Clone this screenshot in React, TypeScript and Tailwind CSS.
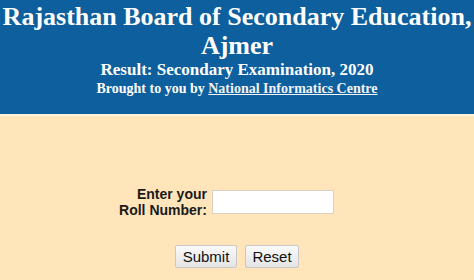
export default function App() {
  return (
    <div className="w-[474px] h-[280px] overflow-hidden bg-[#ffe5b9]">
      <div className="h-[116px] bg-[#0d5f9d] text-white text-center font-['Liberation_Serif',serif] font-bold pt-[2px] border-b-2 border-[#fff3d9]">
        <h1 className="text-[26px] leading-[29px]">Rajasthan Board of Secondary Education, Ajmer</h1>
        <div className="text-[17px] leading-[20px]">Result: Secondary Examination, 2020</div>
        <div className="text-[14px] leading-[17px]">
          Brought to you by <a href="#" className="underline text-[#f3f3f3]">National Informatics Centre</a>
        </div>
      </div>
      <form className="font-['Liberation_Sans',sans-serif] pt-[70px]">
        <div className="flex justify-center items-center gap-[5px] pr-[21px]">
          <label className="text-right font-bold text-[14px] leading-[16px] text-[#1a1a1a]">
            Enter your<br />Roll Number:
          </label>
          <input type="text" className="w-[122px] h-[24px] bg-white border border-[#d8d0c0]" />
        </div>
        <div className="flex justify-center gap-[8px] mt-[27px]">
          <button type="submit" className="w-[62px] h-[23px] text-[15px] border border-[#c8c8c8] rounded-[2px] bg-gradient-to-b from-[#fafafa] to-[#e4e4e4] text-[#111]">Submit</button>
          <button type="reset" className="w-[54px] h-[23px] text-[15px] border border-[#c8c8c8] rounded-[2px] bg-gradient-to-b from-[#fafafa] to-[#e4e4e4] text-[#111]">Reset</button>
        </div>
      </form>
    </div>
  )
}
